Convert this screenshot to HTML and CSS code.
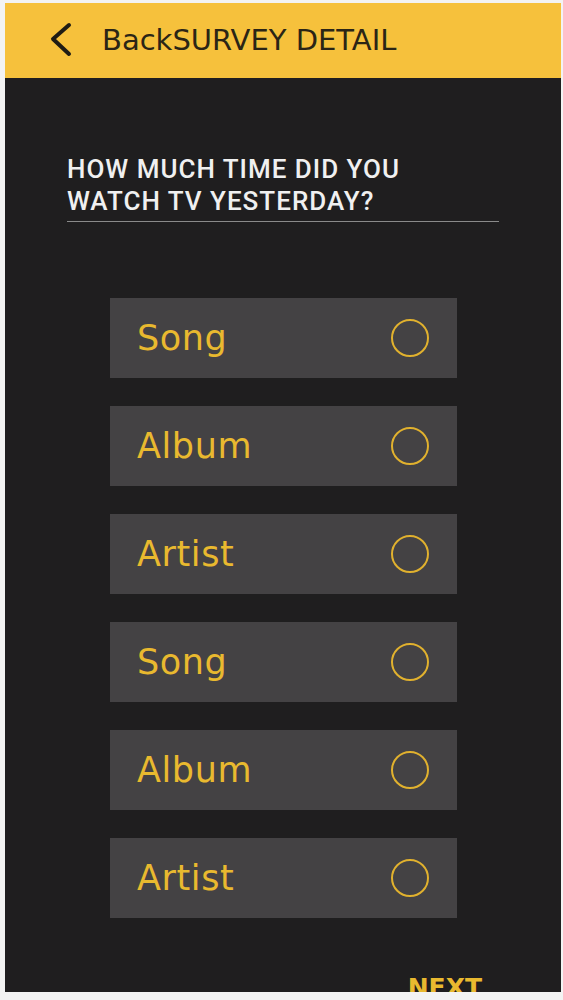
FILE: index.html
```html
<!DOCTYPE html>
<html lang="en">
<head>
  <meta charset="UTF-8">
  <meta name="viewport" content="width=device-width, initial-scale=1.0">
  <title>Survey Detail</title>
  <link rel="stylesheet" href="styles.css">
</head>
<body>
  <div class="screen">
    <!-- Top bar -->
    <header class="topbar">
      <svg class="back-icon" width="24" height="36" viewBox="0 0 24 36">
        <polyline points="20,4 4,18 20,33" fill="none" stroke="#1f1c14" stroke-width="4" stroke-linecap="round" stroke-linejoin="round"/>
      </svg>
      <span class="title">BackSURVEY DETAIL</span>
    </header>

    <div class="content">
      <h2 class="question">HOW MUCH TIME DID YOU<br>WATCH TV YESTERDAY?</h2>

      <div class="options">
        <label class="option"><span>Song</span><span class="radio"></span></label>
        <label class="option"><span>Album</span><span class="radio"></span></label>
        <label class="option"><span>Artist</span><span class="radio"></span></label>
        <label class="option"><span>Song</span><span class="radio"></span></label>
        <label class="option"><span>Album</span><span class="radio"></span></label>
        <label class="option"><span>Artist</span><span class="radio"></span></label>
      </div>

      <div class="actions">
        <span class="next">NEXT</span>
      </div>
    </div>
  </div>
</body>
</html>
```

FILE: styles.css
```css
body {
  margin: 0;
  padding: 3px 2px 0 5px;
  background-color: #f3f3f3;
  font-family: "DejaVu Sans", sans-serif;
}
.screen {
  width: 556px;
  height: 989px;
  overflow: hidden;
  background-color: #1f1e1f;
  display: flex;
  flex-direction: column;
}
.topbar {
  height: 75px;
  flex-shrink: 0;
  background-color: #f6c13c;
  display: flex;
  align-items: center;
  padding-left: 44px;
  box-sizing: border-box;
}
.back-icon {
  display: block;
  margin-top: -3px;
}
.title {
  margin-left: 29px;
  font-size: 29px;
  color: #2b2516;
  margin-top: -1px;
}
.content {
  flex: 1;
}
.question {
  margin: 75px 0 0 62px;
  width: 432px;
  padding-bottom: 4px;
  border-bottom: 1px solid #8a8a8a;
  font-family: Roboto, sans-serif;
  font-weight: 500;
  font-size: 26px;
  letter-spacing: 1px;
  line-height: 32px;
  color: #f0f0f0;
}
.options {
  margin: 76px 0 0 105px;
  width: 347px;
  display: flex;
  flex-direction: column;
  gap: 28px;
}
.option {
  height: 80px;
  background-color: #444244;
  display: flex;
  align-items: center;
  justify-content: space-between;
  padding: 0 28px 0 27px;
  font-size: 35px;
  letter-spacing: 0.6px;
  color: #e9b92f;
}
.radio {
  width: 34px;
  height: 34px;
  border: 2px solid #e1b12e;
  border-radius: 50%;
}
.actions {
  display: flex;
  justify-content: flex-end;
  padding-right: 79px;
  margin-top: 55px;
}
.next {
  font-weight: bold;
  font-size: 25px;
  color: #e9b92f;
}
```
